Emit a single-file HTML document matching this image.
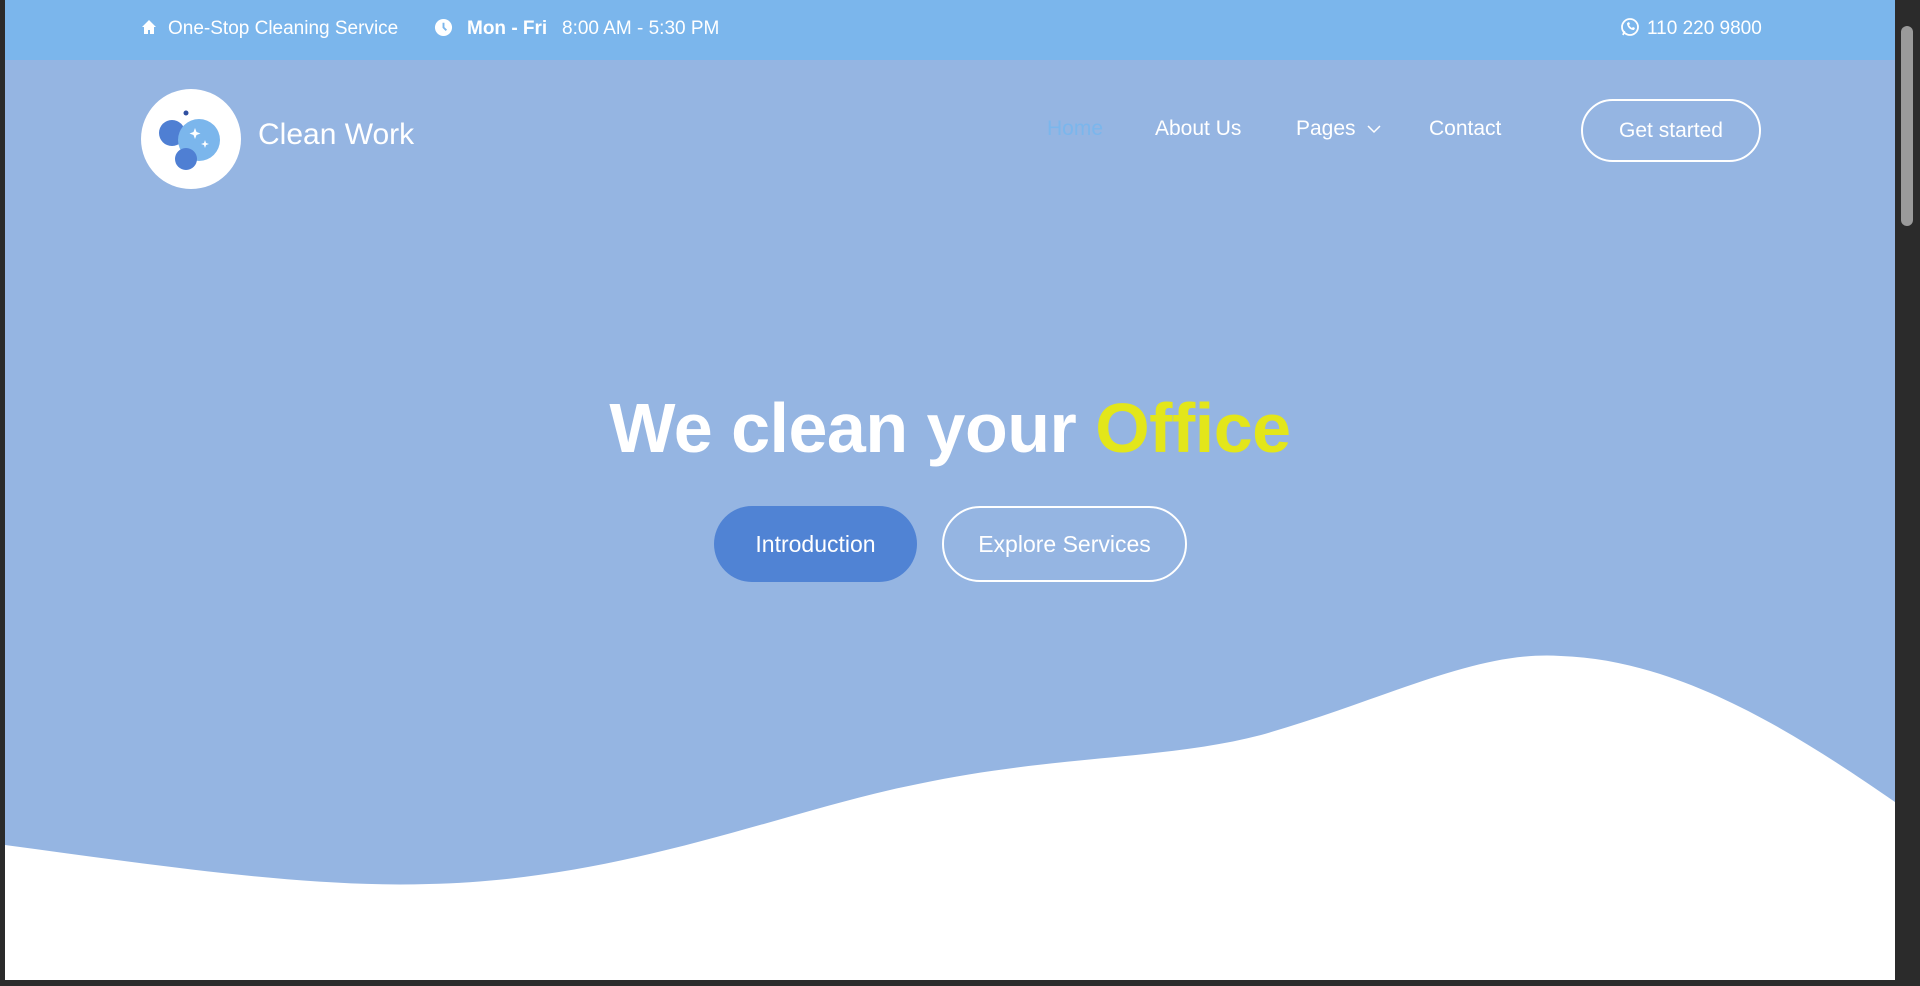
<!DOCTYPE html>
<html><head><meta charset="utf-8"><style>
*{margin:0;padding:0;box-sizing:border-box}
html,body{width:1920px;height:986px;overflow:hidden;background:#2b2b2b;font-family:"Liberation Sans",sans-serif}
.page{position:absolute;left:5px;top:0;width:1890px;height:980px;background:#95b5e2;overflow:hidden}
.top{position:absolute;left:0;top:0;width:1890px;height:60px;background:#7bb6ec;color:#fff;font-size:19px}
.top span{position:absolute;top:18px;white-space:nowrap}
.nav a{position:absolute;top:117px;color:#fff;font-size:21px;text-decoration:none;white-space:nowrap}
.btn{position:absolute;border-radius:40px;color:#fff;font-size:23px;display:flex;align-items:center;justify-content:center}
h1{position:absolute;left:0;width:1890px;top:388px;text-align:center;color:#fff;font-size:70px;font-weight:bold;letter-spacing:-0.5px}
.sb{position:absolute;left:1895px;top:0;width:25px;height:986px;background:#2b2b2b}
</style></head><body>
<div class="page">
 <div class="top">
  <svg style="position:absolute;left:136px;top:19px" width="16" height="16" viewBox="0 0 16 16"><path d="M8 1L1 8h2v7h4v-4h2v4h4V8h2z" fill="#fff"/></svg>
  <span style="left:163px">One-Stop Cleaning Service</span>
  <svg style="position:absolute;left:429px;top:18px" width="19" height="19" viewBox="0 0 20 20"><circle cx="10" cy="10" r="9" fill="#fff"/><path d="M10 5v5l3 3" stroke="#7bb6ec" stroke-width="2" fill="none"/></svg>
  <span style="left:462px;font-weight:bold">Mon - Fri</span>
  <span style="left:557px">8:00 AM - 5:30 PM</span>
  <svg style="position:absolute;left:1615px;top:17px" width="20" height="20" viewBox="0 0 20 20"><circle cx="10" cy="10" r="8" fill="none" stroke="#fff" stroke-width="1.8"/><path d="M3 18l1.5-4" stroke="#fff" stroke-width="1.8"/><path d="M7 6c0 4 3 7 7 7l1-2-2-1-1 1c-1-.5-2.5-2-3-3l1-1-1-2z" fill="#fff"/></svg>
  <span style="left:1642px">110 220 9800</span>
 </div>
 <svg style="position:absolute;left:136px;top:89px" width="100" height="100" viewBox="0 0 100 100">
  <circle cx="50" cy="50" r="50" fill="#fff"/>
  <circle cx="31" cy="44" r="13" fill="#4f7fd3"/>
  <circle cx="58" cy="51" r="21" fill="#7bb6ec"/>
  <circle cx="45" cy="70" r="11" fill="#4f7fd3"/>
  <circle cx="45" cy="24" r="2.5" fill="#2f4fa0"/>
  <path d="M54 39l1.5 4 4 1.5-4 1.5-1.5 4-1.5-4-4-1.5 4-1.5z M64 51l1 3 3 1-3 1-1 3-1-3-3-1 3-1z" fill="#fff"/>
 </svg>
 <div style="position:absolute;left:253px;top:118px;color:#fff;font-size:30px">Clean Work</div>
 <div class="nav">
  <a style="left:1042px;color:#7bb6ec">Home</a>
  <a style="left:1150px">About Us</a>
  <a style="left:1291px">Pages</a>
  <svg style="position:absolute;left:1362px;top:124px" width="14" height="10" viewBox="0 0 14 10"><path d="M1 2l6 6 6-6" stroke="#fff" stroke-width="1.5" fill="none"/></svg>
  <a style="left:1424px">Contact</a>
 </div>
 <div class="btn" style="left:1576px;top:99px;width:180px;height:63px;border:2px solid #fff;font-size:21px">Get started</div>
 <h1>We clean your <span style="color:#e3e61a">Office</span></h1>
 <div class="btn" style="left:709px;top:506px;width:203px;height:76px;background:#5083d4">Introduction</div>
 <div class="btn" style="left:937px;top:506px;width:245px;height:76px;border:2px solid #fff">Explore Services</div>
 <svg style="position:absolute;left:0;top:0" width="1890" height="980" viewBox="0 0 1890 980">
  <path d="M0 845 C150 865 300 888 424 884 C620 880 780 810 913 784 C1050 755 1160 760 1256 735 C1380 700 1470 650 1556 656 C1680 660 1800 740 1890 802 L1890 980 L0 980 Z" fill="#fff"/>
 </svg>
</div>
<div class="sb"><div style="position:absolute;left:6px;top:26px;width:12px;height:200px;background:#9a9a9a;border-radius:6px"></div></div>
</body></html>
